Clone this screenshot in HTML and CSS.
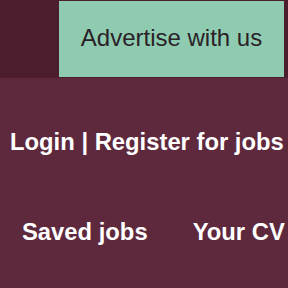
FILE: index.html
```html
<!DOCTYPE html>
<html>
<head>
<meta charset="utf-8">
<link rel="stylesheet" href="styles.css">
</head>
<body>
<header class="topbar">
  <a class="advertise" href="#">Advertise with us</a>
</header>
<nav class="account">
  <div class="login-row"><a href="#">Login</a> | <a href="#">Register for jobs</a></div>
  <div class="links-row"><a href="#">Saved jobs</a><a href="#">Your CV</a></div>
</nav>
</body>
</html>
```
FILE: styles.css
```css
html, body {
  margin: 0;
  padding: 0;
  height: 100%;
}
body {
  background: #5e283d;
  font-family: "Liberation Sans", Arial, sans-serif;
  overflow: hidden;
}
a { text-decoration: none; color: inherit; }
.topbar {
  background: #4b1d2d;
  height: 78px;
  display: flex;
  padding: 1px 4px 1px 59px;
  box-sizing: border-box;
}
.advertise {
  flex: 1;
  background: #8ecbb1;
  color: #2b2228;
  font-size: 24px;
  display: flex;
  align-items: center;
  justify-content: center;
  padding-bottom: 2px;
}
.account {
  color: #ffffff;
  font-weight: bold;
  font-size: 23.8px;
}
.login-row {
  padding: 50px 0 0 10px;
  white-space: nowrap;
  line-height: 28px;
}
.links-row {
  display: flex;
  gap: 45px;
  padding: 62px 0 0 22px;
  white-space: nowrap;
  line-height: 28px;
}
```
